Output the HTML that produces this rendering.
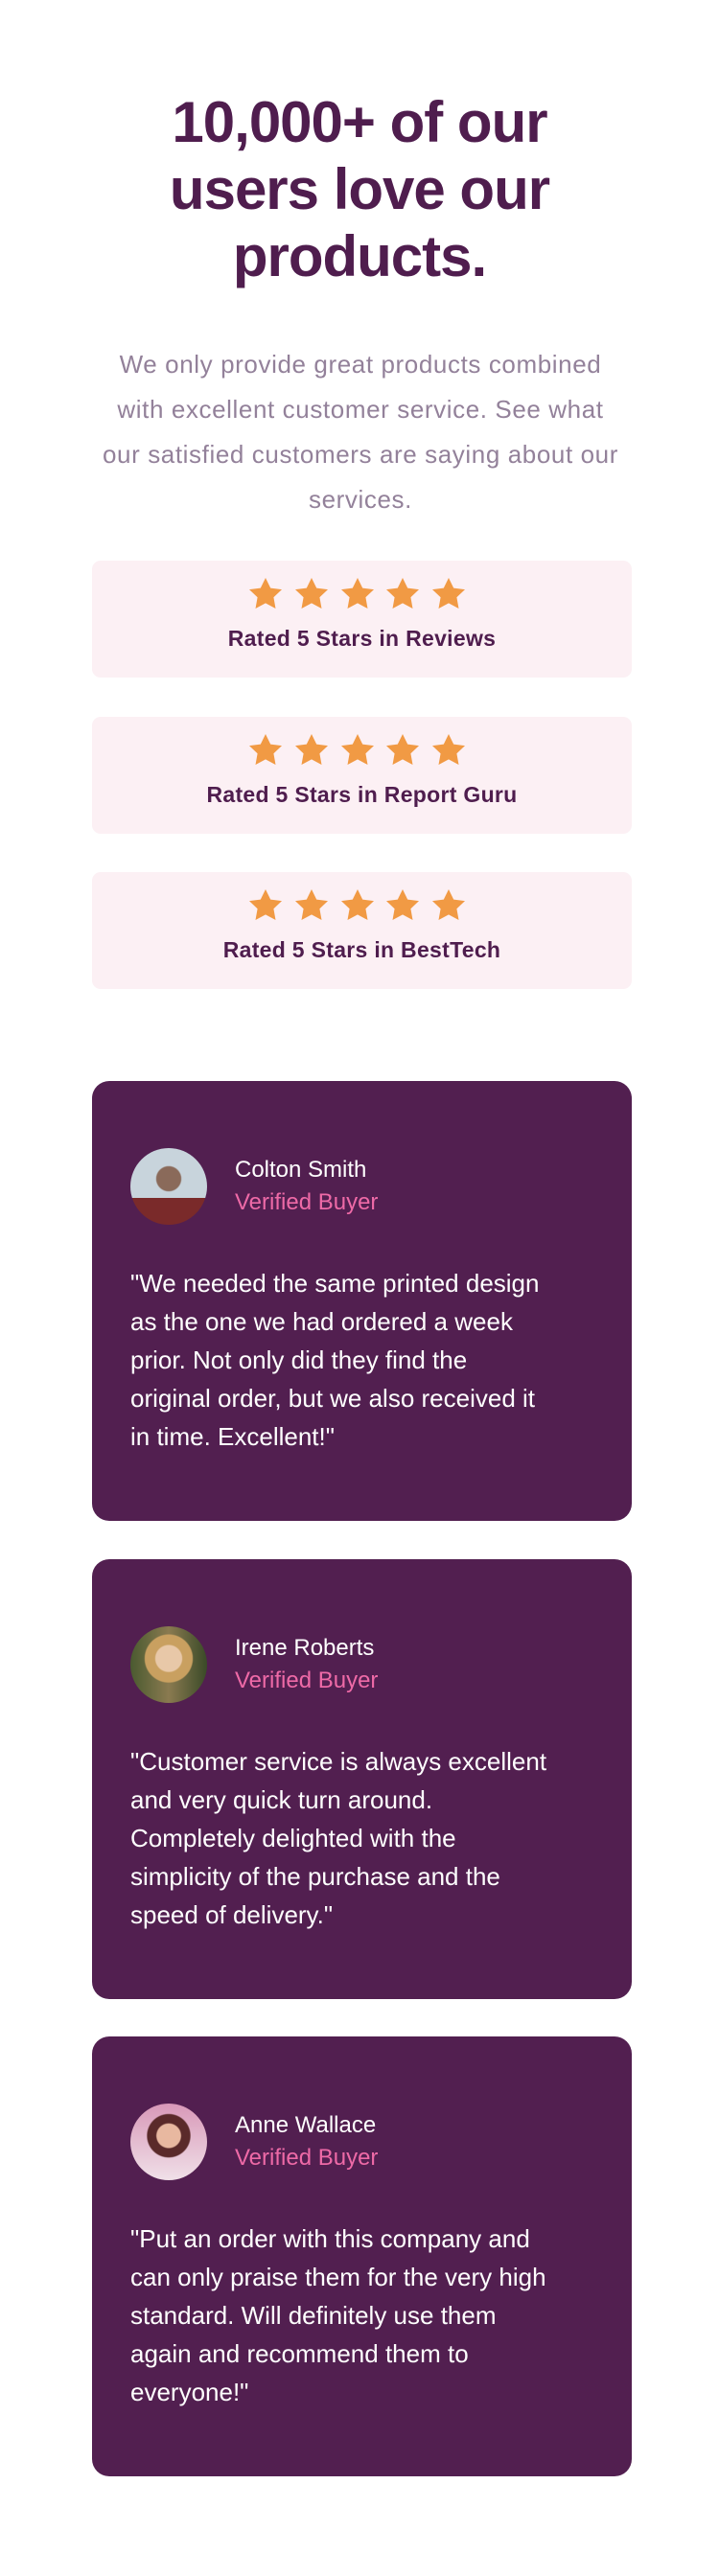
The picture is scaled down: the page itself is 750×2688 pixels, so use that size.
<!DOCTYPE html>
<html><head><meta charset="utf-8"><style>
*{margin:0;padding:0;box-sizing:border-box}
body{width:750px;height:2688px;background:#fff;font-family:"Liberation Sans",sans-serif;position:relative;overflow:hidden}
h1{position:absolute;left:0;width:750px;top:93px;text-align:center;color:#4f1d4e;font-size:60px;line-height:70px;font-weight:bold;letter-spacing:-1px}
p.lead{position:absolute;left:76px;width:600px;top:357px;text-align:center;color:#93819a;font-size:26px;line-height:47px;letter-spacing:.6px;white-space:nowrap}
.box{position:absolute;left:96px;width:563px;height:122px;background:#fcf0f4;border-radius:9px}
.stars{position:absolute;top:18px;left:0;width:100%;text-align:center;height:34px}
.stars svg{position:absolute;top:0}
.box .t{position:absolute;top:68px;left:0;width:100%;text-align:center;color:#4f1d4e;font-weight:bold;font-size:23px;letter-spacing:.3px}
.card{position:absolute;left:96px;width:563px;height:459px;background:#521f50;border-radius:18px;color:#fff}
.av{position:absolute;left:40px;top:70px;width:80px;height:80px;border-radius:50%;overflow:hidden}
.name{position:absolute;left:149px;top:79px;font-size:24px}
.ver{position:absolute;left:149px;top:113px;font-size:24px;color:#ee6aa7}
.q{position:absolute;left:40px;top:191px;width:500px;font-size:26px;line-height:40px;white-space:nowrap}
</style></head><body>
<h1>10,000+ of our<br>users love our<br>products.</h1>
<p class="lead">We only provide great products combined<br>with excellent customer service. See what<br>our satisfied customers are saying about our<br>services.</p>

<svg width="0" height="0" style="position:absolute"><defs><symbol id="s" viewBox="0 0 34 32"><path d="M17 0l5.2 10.6 11.8 1.5-8.6 8.2 2.1 11.7L17 26.4 6.5 32l2.1-11.7L0 12.1l11.8-1.5z" fill="#f19a44"/></symbol></defs></svg>

<div class="box" style="top:585px"><div class="stars">
<svg width="34" height="32" style="left:164px"><use href="#s"/></svg><svg width="34" height="32" style="left:212px"><use href="#s"/></svg><svg width="34" height="32" style="left:260px"><use href="#s"/></svg><svg width="34" height="32" style="left:307px"><use href="#s"/></svg><svg width="34" height="32" style="left:355px"><use href="#s"/></svg>
</div><div class="t">Rated 5 Stars in Reviews</div></div>
<div class="box" style="top:748px"><div class="stars">
<svg width="34" height="32" style="left:164px"><use href="#s"/></svg><svg width="34" height="32" style="left:212px"><use href="#s"/></svg><svg width="34" height="32" style="left:260px"><use href="#s"/></svg><svg width="34" height="32" style="left:307px"><use href="#s"/></svg><svg width="34" height="32" style="left:355px"><use href="#s"/></svg>
</div><div class="t">Rated 5 Stars in Report Guru</div></div>
<div class="box" style="top:910px"><div class="stars">
<svg width="34" height="32" style="left:164px"><use href="#s"/></svg><svg width="34" height="32" style="left:212px"><use href="#s"/></svg><svg width="34" height="32" style="left:260px"><use href="#s"/></svg><svg width="34" height="32" style="left:307px"><use href="#s"/></svg><svg width="34" height="32" style="left:355px"><use href="#s"/></svg>
</div><div class="t">Rated 5 Stars in BestTech</div></div>

<div class="card" style="top:1128px">
<div class="av" style="background:radial-gradient(circle at 50% 40%,#8a6a5a 0 20%,transparent 22%),linear-gradient(#c8d4dc 0 65%,#7a2a2a 65%)"></div>
<div class="name">Colton Smith</div><div class="ver">Verified Buyer</div>
<div class="q">"We needed the same printed design<br>as the one we had ordered a week<br>prior. Not only did they find the<br>original order, but we also received it<br>in time. Excellent!"</div>
</div>
<div class="card" style="top:1627px">
<div class="av" style="background:radial-gradient(circle at 50% 42%,#e8c8a8 0 22%,#c9a060 24%,#c9a060 40%,transparent 42%),linear-gradient(90deg,#4a5a30,#8a7a50,#3a4a28)"></div>
<div class="name">Irene Roberts</div><div class="ver">Verified Buyer</div>
<div class="q">"Customer service is always excellent<br>and very quick turn around.<br>Completely delighted with the<br>simplicity of the purchase and the<br>speed of delivery."</div>
</div>
<div class="card" style="top:2125px">
<div class="av" style="background:radial-gradient(circle at 50% 42%,#e8b8a0 0 20%,#5a2a2a 22%,#5a2a2a 36%,transparent 38%),linear-gradient(#d898b8,#f0e0e8)"></div>
<div class="name">Anne Wallace</div><div class="ver">Verified Buyer</div>
<div class="q">"Put an order with this company and<br>can only praise them for the very high<br>standard. Will definitely use them<br>again and recommend them to<br>everyone!"</div>
</div>
</body></html>
